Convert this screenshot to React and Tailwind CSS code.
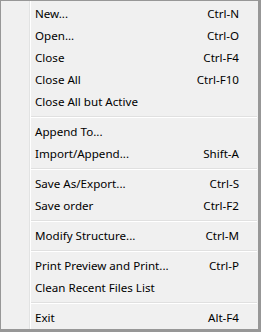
import React from "react";

const groups = [
  [
    ["New...", "Ctrl-N"],
    ["Open...", "Ctrl-O"],
    ["Close", "Ctrl-F4"],
    ["Close All", "Ctrl-F10"],
    ["Close All but Active", ""],
  ],
  [
    ["Append To...", ""],
    ["Import/Append...", "Shift-A"],
  ],
  [
    ["Save As/Export...", "Ctrl-S"],
    ["Save order", "Ctrl-F2"],
  ],
  [["Modify Structure...", "Ctrl-M"]],
  [
    ["Print Preview and Print...", "Ctrl-P"],
    ["Clean Recent Files List", ""],
  ],
  [["Exit", "Alt-F4"]],
];

function Item({ label, shortcut }) {
  return (
    <div className="flex h-[22px] items-center pl-[34px] pr-[19px]">
      <span className="flex-1">{label}</span>
      <span>{shortcut}</span>
    </div>
  );
}

function Sep() {
  return (
    <div className="flex h-[8px] flex-col justify-center pl-[30px] pr-[1px]">
      <div className="h-px bg-[#e0e0e0]" />
      <div className="h-px bg-white" />
    </div>
  );
}

export default function App() {
  return (
    <div
      className="relative h-[332px] w-[261px] border-l border-t border-r-[3px] border-b-[3px] border-[#979797] bg-[#f0f0f0] pt-[2px] text-[11.6px] text-black"
      style={{ fontFamily: '"Noto Sans", "Open Sans", sans-serif' }}
    >
      <div className="absolute bottom-0 left-[28px] top-0 flex">
        <div className="w-px bg-[#e2e3e3]" />
        <div className="w-px bg-white" />
      </div>
      <div className="relative">
        {groups.map((g, gi) => (
          <React.Fragment key={gi}>
            {gi > 0 && <Sep />}
            {g.map(([l, s]) => (
              <Item key={l} label={l} shortcut={s} />
            ))}
          </React.Fragment>
        ))}
      </div>
    </div>
  );
}
